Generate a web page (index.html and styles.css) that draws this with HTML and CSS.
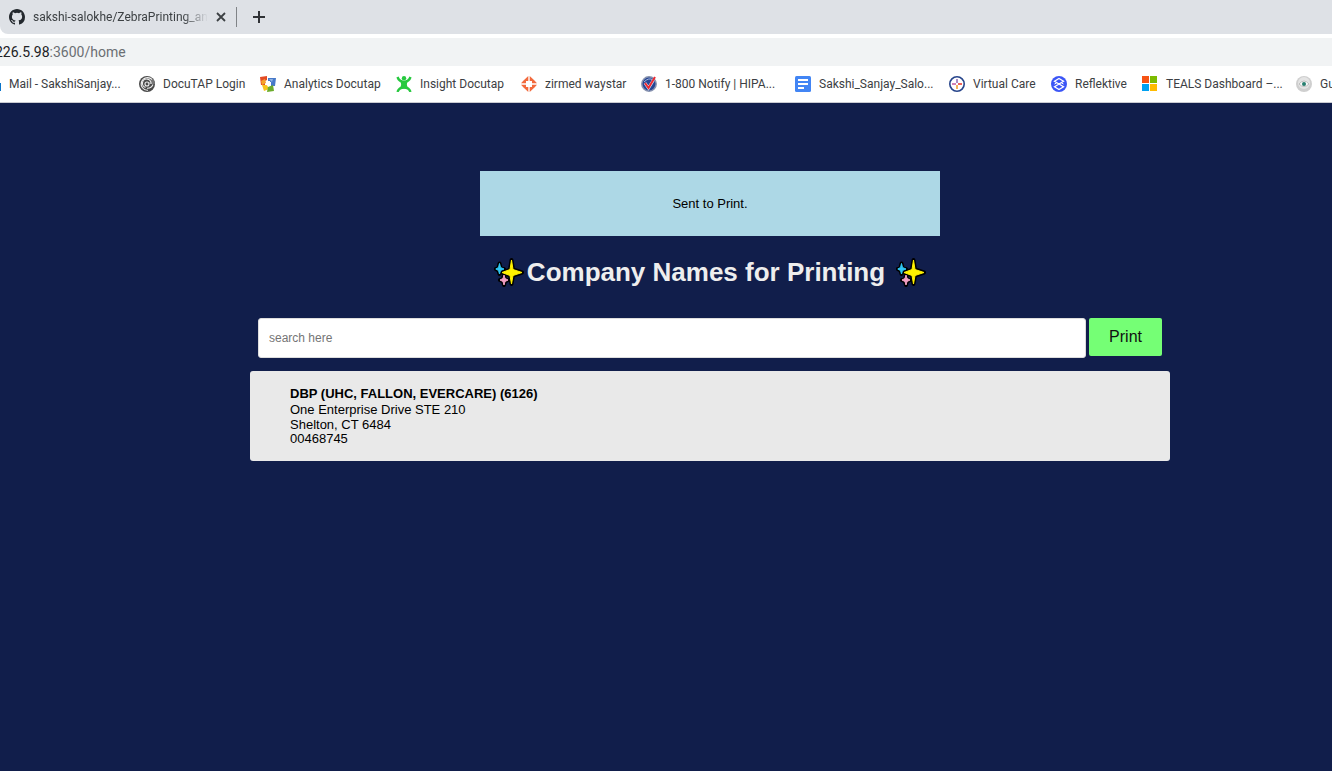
FILE: index.html
```html
<!DOCTYPE html>
<html lang="en">
<head>
<meta charset="utf-8">
<title>Company Names for Printing</title>
<link rel="stylesheet" href="styles.css">
</head>
<body>
<svg class="defs" aria-hidden="true">
  <symbol id="sparkles" viewBox="0 0 30 30">
    <g stroke="#000" stroke-width="4" stroke-linejoin="round">
      <path fill="#fff100" d="M17.500 3L19 12.500L28 15.500L19 18.500L17.500 27L16 18.500L8 15.500L16 12.500Z"/>
      <path fill="#30c8f5" d="M5.500 6.500L6.500 10.500L10 12L6.500 13.500L5.500 17L4.500 13.500L1.800 12L4.500 10.500Z"/>
      <path fill="#f4a0c4" d="M10 18L11 21.500L14 23L11 24.500L10 28L9 24.500L6 23L9 21.500Z"/>
    </g>
    <path fill="#fff100" stroke="#fff100" d="M17.500 3L19 12.500L28 15.500L19 18.500L17.500 27L16 18.500L8 15.500L16 12.500Z"/>
    <path fill="#30c8f5" stroke="#30c8f5" d="M5.500 6.500L6.500 10.500L10 12L6.500 13.500L5.500 17L4.500 13.500L1.800 12L4.500 10.500Z"/>
    <path fill="#f4a0c4" stroke="#f4a0c4" d="M10 18L11 21.500L14 23L11 24.500L10 28L9 24.500L6 23L9 21.500Z"/>
  </symbol>
</svg>

<header class="browser">
  <div class="tabs">
    <div class="tab">
      <svg class="icon" viewBox="0 0 16 16" fill="#24292e"><path d="M8 0C3.580 0 0 3.580 0 8c0 3.540 2.290 6.530 5.470 7.590.4.070.55-.17.55-.38 0-.19-.01-.82-.01-1.490-2.010.37-2.530-.49-2.690-.94-.09-.23-.48-.94-.82-1.130-.28-.15-.68-.52-.01-.53.63-.01 1.080.58 1.230.82.72 1.210 1.870.87 2.330.66.070-.52.28-.87.51-1.070-1.780-.2-3.640-.89-3.640-3.950 0-.87.31-1.590.82-2.150-.08-.2-.36-1.020.08-2.120 0 0 .67-.21 2.200.82a7.600 7.600 0 0 1 4 0c1.530-1.040 2.200-.82 2.200-.82.44 1.100.16 1.920.08 2.120.51.56.82 1.270.82 2.150 0 3.070-1.870 3.750-3.650 3.950.29.25.54.73.54 1.480 0 1.070-.01 1.930-.01 2.200 0 .21.15.46.55.38A8.010 8.010 0 0 0 16 8c0-4.420-3.580-8-8-8z"/></svg>
      <span class="tab-title">sakshi-salokhe/ZebraPrinting_and</span>
      <button class="tab-close" aria-label="Close tab"><svg viewBox="0 0 10 10" width="10" height="10"><path d="M1 1L9 9M9 1L1 9" stroke="#3c4043" stroke-width="1.800"/></svg></button>
    </div>
    <button class="tab-new" aria-label="New tab"><svg viewBox="0 0 12 12" width="12" height="12"><path d="M6 0V12M0 6H12" stroke="#303236" stroke-width="2"/></svg></button>
  </div>
  <div class="address"><span class="host">226.5.98</span>:3600/home</div>
  <nav class="bookmarks" aria-label="Bookmarks">
    <a href="#"><svg class="icon" viewBox="0 0 16 16"><path fill="#0a74c9" d="M2 7H16V15H2Z"/></svg>Mail - SakshiSanjay...</a>
    <a href="#"><svg class="icon" viewBox="0 0 16 16"><circle cx="8" cy="8" r="8" fill="#4a4a4a"/><path d="M8 8L16 8A8 8 0 0 0 14 2.700Z" fill="#777"/><g fill="none" stroke="#eee" stroke-width="1.100"><path d="M13 3.500A6.300 6.300 0 1 0 9 14.200"/><path d="M12 8A4.300 4.300 0 1 0 6.500 11.500M14 8.500A6 6 0 0 1 8 12.200"/><circle cx="8" cy="8" r="2"/></g></svg>DocuTAP Login</a>
    <a href="#"><svg class="icon" viewBox="0 0 16 16"><path fill="#e34b24" d="M0 1L7 0V4L5 5L5 9L1 9Z"/><path fill="#f5a22b" d="M1 5L5 3L6 7L2 9Z"/><path fill="#4779c8" d="M8 2L16 2L15 10L11 10L11 6L8 6Z"/><path fill="#8fb3e3" d="M9 3L13 3L12 6Z"/><path fill="#f7c51e" d="M2 9L7 9L9 13L4 15Z"/><path fill="#6cac2c" d="M8 11L13 9L14 15L7 16Z"/><path fill="#fff" d="M6 5L10 5L10 10L6 9Z"/></svg>Analytics Docutap</a>
    <a href="#"><svg class="icon" viewBox="0 0 16 16"><circle cx="8" cy="2.200" r="2.200" fill="#27c93f"/><path d="M1.500 1Q3 5.500 8 6Q13 5.500 14.500 1M1.500 16Q3 11.500 8 11.500Q13 11.500 14.500 16" fill="none" stroke="#27c93f" stroke-width="2.400"/><path d="M4 5H12Q9.500 8.500 12.500 12.500H3.500Q6.500 8.500 4 5Z" fill="#27c93f"/></svg>Insight Docutap</a>
    <a href="#"><svg class="icon" viewBox="0 0 16 16" fill="#f26a3d"><path d="M7.300 0V5L5 5L2.500 4.500ZM8.700 0V5L11 5L13.500 4.500ZM7.300 16V11L5 11L2.500 11.500ZM8.700 16V11L11 11L13.500 11.500ZM0 7.300L2.500 4.500L5 5V7.300ZM16 7.300L13.500 4.500L11 5V7.300ZM0 8.700L2.500 11.500L5 11V8.700ZM16 8.700L13.500 11.500L11 11V8.700Z"/><path fill="#fff" d="M8 4.500L9.500 6.500L11.500 8L9.500 9.500L8 11.500L6.500 9.500L4.500 8L6.500 6.500Z"/></svg>zirmed waystar</a>
    <a href="#"><svg class="icon" viewBox="0 0 16 16"><circle cx="8" cy="8" r="7.200" fill="#254695" stroke="#8792ae" stroke-width="1.500"/><path d="M3 6Q8 1 12 4" fill="none" stroke="#a9b9df"/><path d="M4 7L7.500 12L12.500 4" fill="none" stroke="#dfe5f4" stroke-width="3"/><path d="M4 7L7.500 12L14 1" fill="none" stroke="#ed2a32" stroke-width="2"/></svg>1-800 Notify | HIPA...</a>
    <a href="#"><svg class="icon" viewBox="0 0 16 16"><rect width="16" height="16" rx="1.500" fill="#4285f4"/><path d="M3 4H13M3 8H13M3 12H9" stroke="#fff" stroke-width="1.800"/></svg>Sakshi_Sanjay_Salo...</a>
    <a href="#"><svg class="icon" viewBox="0 0 16 16" fill="none"><circle cx="8" cy="8" r="7.200" fill="#fff" stroke="#27458b" stroke-width="1.600"/><g stroke-width="2"><path d="M8 3V7" stroke="#a98cc8"/><path d="M9 8H13" stroke="#f0645c"/><path d="M8 9V13" stroke="#f5b35a"/><path d="M3 8H7" stroke="#d183b7"/></g></svg>Virtual Care</a>
    <a href="#"><svg class="icon" viewBox="0 0 16 16"><circle cx="8" cy="8" r="8" fill="#3b55f6"/><path d="M8 2.500L12.500 5.300L8 8L3.500 5.300ZM3.500 10.700L8 8L12.500 10.700L8 13.500Z" fill="none" stroke="#fff" stroke-width="1.300"/><path d="M3.500 8L5.500 7M12.500 8L10.500 7" stroke="#fff"/></svg>Reflektive</a>
    <a href="#"><svg class="icon" viewBox="0 0 16 16"><path fill="#f65314" d="M0 0H7V7H0Z"/><path fill="#7cbb00" d="M8 0H15V7H8Z"/><path fill="#00a1f1" d="M0 8H7V15H0Z"/><path fill="#ffbb00" d="M8 8H15V15H8Z"/></svg>TEALS Dashboard –...</a>
    <a href="#"><svg class="icon" viewBox="0 0 16 16"><circle cx="8" cy="8" r="8" fill="#cfcfcf"/><circle cx="8" cy="7" r="6" fill="#e4e4e4"/><path d="M3 8Q8 2 13 8Q8 13 3 8" fill="#fafafa" stroke="#aaa" stroke-width=".7"/><circle cx="8" cy="8" r="2" fill="#287f70"/></svg>Gu</a>
  </nav>
</header>

<main class="page">
  <div class="notice" role="status">Sent to Print.</div>
  <h1 class="title"><svg class="sparkle" aria-hidden="true"><use href="#sparkles"/></svg><span>Company Names for Printing</span><svg class="sparkle sparkle-end" aria-hidden="true"><use href="#sparkles"/></svg></h1>
  <form class="search">
    <input class="search-input" type="text" placeholder="search here" aria-label="Search companies">
    <button class="print" type="button">Print</button>
  </form>
  <article class="card">
    <h2 class="company">DBP (UHC, FALLON, EVERCARE) (6126)</h2>
    <p class="street">One Enterprise Drive STE 210</p>
    <p>Shelton, CT 6484</p>
    <p>00468745</p>
  </article>
</main>
</body>
</html>
```
FILE: styles.css
```css
* { box-sizing: border-box; }
body {
  margin: 0;
  min-height: 100vh;
  display: flex;
  flex-direction: column;
  overflow-x: hidden;
  background: #111e4b;
  font-family: "Liberation Sans", Arial, sans-serif;
}
h1, h2, p { margin: 0; }
button { border: 0; padding: 0; background: none; }
.defs { display: none; }
.icon { width: 16px; height: 16px; flex: none; }

.browser {
  background: #fff;
  border-bottom: 1px solid #c9cbd2;
  font-family: Roboto, "Noto Sans", sans-serif;
  font-size: 12px;
  color: #3c4043;
}
.tabs {
  display: flex;
  align-items: center;
  height: 34px;
  background: #dee1e6;
  border-bottom-left-radius: 8px;
}
.tab {
  display: flex;
  align-items: center;
  width: 237px;
  height: 20px;
  padding-left: 9px;
  border-right: 1px solid #808387;
}
.tab-title {
  width: 175px;
  margin: 0 8px;
  overflow: hidden;
  white-space: nowrap;
  -webkit-mask-image: linear-gradient(to right, #000 150px, transparent);
  mask-image: linear-gradient(to right, #000 150px, transparent);
}
.tab-close, .tab-new { display: flex; }
.tab-new { margin-left: 16px; }
.address {
  height: 28px;
  margin-top: 4px;
  margin-left: -5px;
  background: #f1f3f4;
  font-size: 14px;
  line-height: 28px;
  color: #6b6f73;
}
.host { color: #202124; }
.bookmarks {
  display: grid;
  grid-template-columns: 154px 121px 136px 125px 120px 154px 154px 102px 91px 154px 1fr;
  align-items: center;
  height: 36px;
  margin-left: -15px;
  overflow: hidden;
}
.bookmarks a {
  display: flex;
  align-items: center;
  gap: 8px;
  color: inherit;
  text-decoration: none;
  white-space: nowrap;
}

.page {
  flex: 1;
  display: flex;
  flex-direction: column;
  align-items: center;
  padding: 68px 0 24px 88px;
}
.notice {
  width: 460px;
  max-width: 100%;
  padding: 24px;
  background: #add8e6;
  font-size: 13px;
  line-height: 17px;
  text-align: center;
}
.title {
  display: flex;
  align-items: center;
  margin-top: 20px;
  color: #eee;
  font-size: 26px;
  line-height: 32px;
}
.sparkle { width: 30px; height: 30px; margin-right: 3px; }
.sparkle-end { margin: 0 0 0 11px; }
.search {
  display: flex;
  align-items: flex-start;
  gap: 3px;
  width: 904px;
  max-width: 100%;
  margin-top: 30px;
}
.search-input {
  flex: 1;
  height: 40px;
  padding: 0 10px;
  border: 1px solid #ddd;
  border-radius: 3px;
  background: #fff;
  font: 12px "Liberation Sans", Arial, sans-serif;
}
.search-input::placeholder { color: #757575; }
.print {
  padding: 0 20px;
  border-radius: 2px;
  background: #75ff75;
  color: #111;
  font: 16px/38px "Liberation Sans", Arial, sans-serif;
}
.card {
  width: 920px;
  max-width: 100%;
  margin-top: 13px;
  padding: 15px 40px;
  border-radius: 3px;
  background: #e9e9e9;
  color: #000;
  font-size: 13px;
  line-height: 14px;
}
.company { font-size: 13px; line-height: 16px; }
.street { line-height: 16px; }
```
